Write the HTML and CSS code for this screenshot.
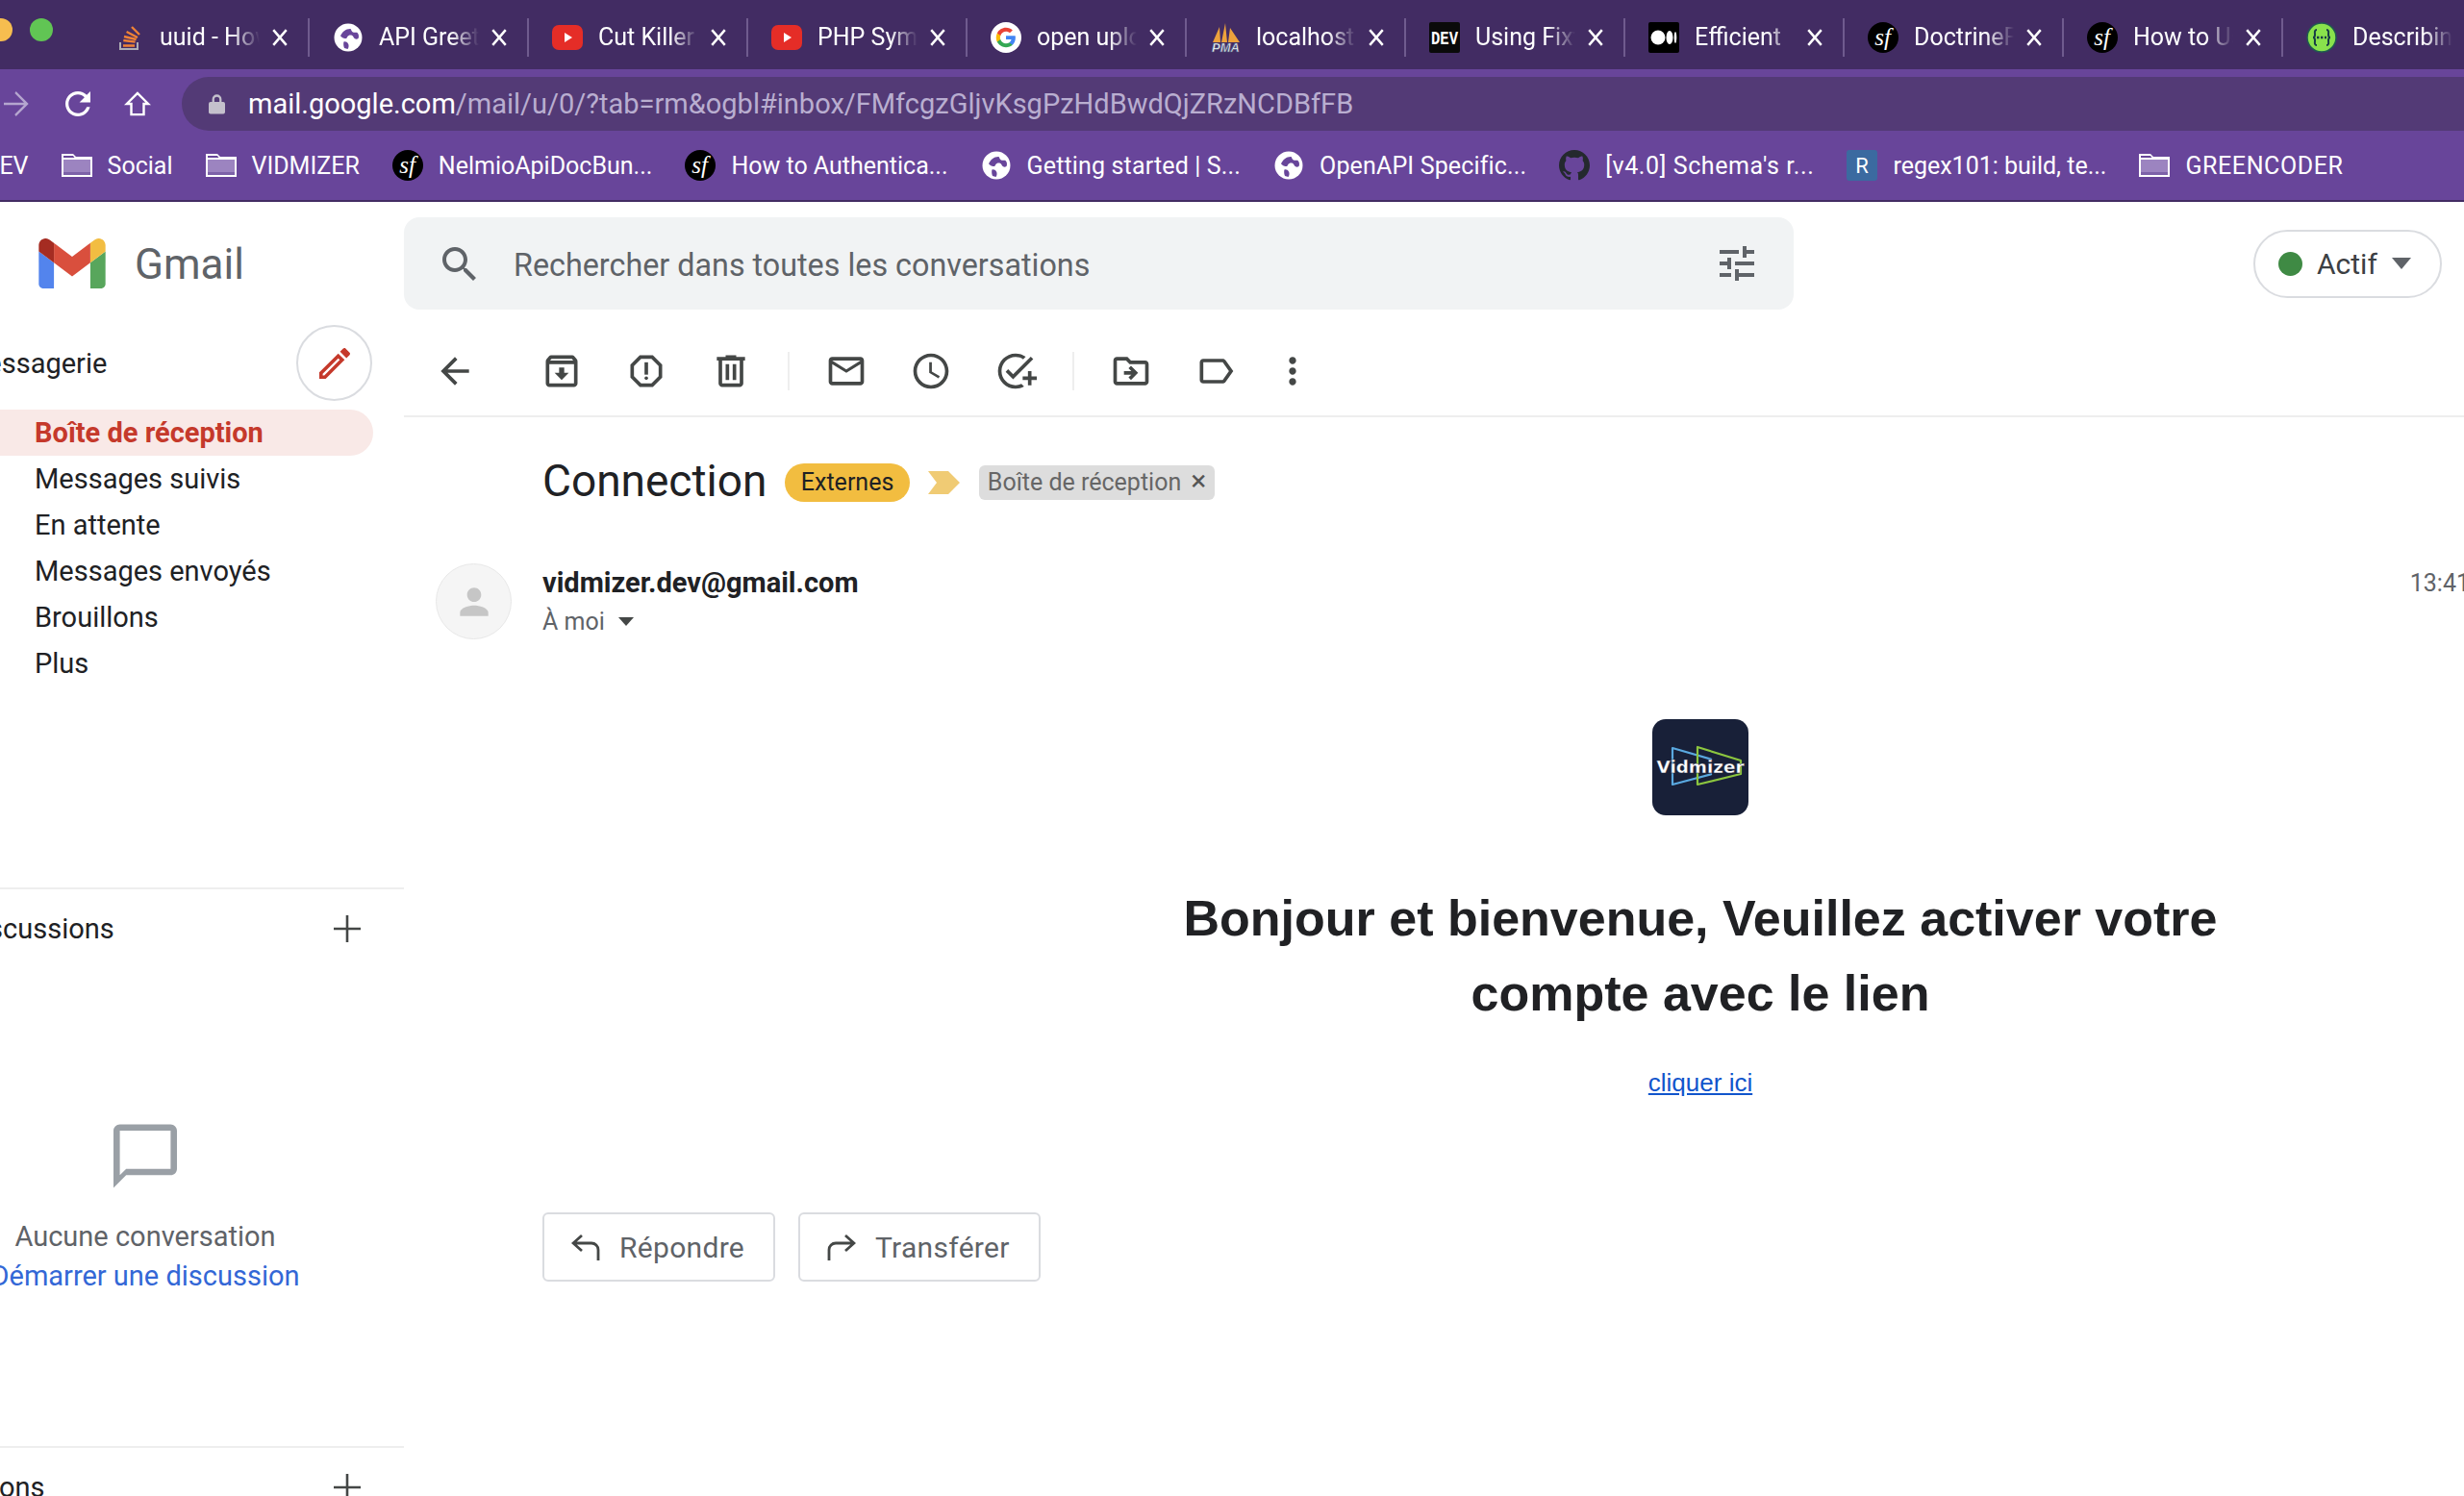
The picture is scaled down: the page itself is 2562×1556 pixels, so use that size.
FILE: index.html
```html
<!DOCTYPE html>
<html lang="fr">
<head>
    <meta charset="UTF-8">
    <meta name="viewport" content="width=device-width, initial-scale=1.0">
    <title>Connection - Gmail</title>
    <link rel="stylesheet" href="styles.css">
</head>
<body>
    <!-- icones reutilisees -->
    <svg class="sprite" aria-hidden="true">
        <symbol id="ic-globe" viewBox="0 0 32 32"><circle cx="16" cy="16" r="14.500" fill="#fff"/><path fill="#68459a" d="M8 14.500c1.500-4 5.500-7.500 10-7.500 1.500 0 1 2.500 3 3.500s3-.5 4.500.5c1.500 1.500 2 4 1 6-2 1.500-4 .5-5-1.500s-3-2.500-5-1.500-1 3.500-4 3-3.500-2-4.500-2.500z"/><path fill="#68459a" d="M11.500 20.500c2-.5 3.500.5 4.500 2s.5 4.500-.5 5.500l-3.500-1c-1-2.500-1-5-.5-6.500z"/></symbol>
        <symbol id="ic-yt" viewBox="0 0 32 32"><rect y="3" width="32" height="26" rx="7" fill="#e52d27"/><path fill="#fff" d="M13 11l8 5-8 5z"/></symbol>
        <symbol id="ic-sf" viewBox="0 0 32 32"><circle cx="16" cy="16" r="16" fill="#000"/><text x="15.500" y="24" text-anchor="middle" fill="#fff" font-family="Liberation Serif, serif" font-style="italic" font-size="25">sf</text></symbol>
        <symbol id="ic-folder" viewBox="0 0 32 32"><rect x="2" y="10" width="28" height="13" fill="#9c84c0"/><rect x="2" y="23" width="28" height="3" fill="#7d62a8"/><path fill="#fff" fill-rule="evenodd" d="M0 4h12l3 3h17v21H0zM2 6v2h11.500L12 6zM2 10v16h28V10z"/></symbol>
        <symbol id="ic-close" viewBox="0 0 16 16"><path stroke="#fff" stroke-width="2.200" d="M2 1l12 14M14 1L2 15"/></symbol>
        <symbol id="ic-plus" viewBox="0 0 28 28"><path stroke="#444746" stroke-width="2.600" d="M14 0v28M0 14h28"/></symbol>
    </svg>

    <header class="browser">
        <div class="tabs">
            <span class="light light-yellow"></span>
            <span class="light light-green"></span>
            <div class="tab">
                <svg class="favicon" viewBox="0 0 32 32"><path fill="#aeaeb4" d="M6 21h2v6h16v-6h2v8H6z"/><g stroke-width="2.400" stroke="#ef8236"><path d="M10 24.500h12M10.300 19l12.300 1.600M11 15l12.600 3M13.600 10L25 16M19 5l8 8"/></g></svg>
                <span class="tab-title">uuid - How to</span>
                <svg class="tab-close"><use href="#ic-close"/></svg>
            </div>
            <div class="tab">
                <svg class="favicon"><use href="#ic-globe"/></svg>
                <span class="tab-title">API Greetings</span>
                <svg class="tab-close"><use href="#ic-close"/></svg>
            </div>
            <div class="tab">
                <svg class="favicon"><use href="#ic-yt"/></svg>
                <span class="tab-title">Cut Killer Show</span>
                <svg class="tab-close"><use href="#ic-close"/></svg>
            </div>
            <div class="tab">
                <svg class="favicon"><use href="#ic-yt"/></svg>
                <span class="tab-title">PHP Symfony</span>
                <svg class="tab-close"><use href="#ic-close"/></svg>
            </div>
            <div class="tab">
                <svg class="favicon" viewBox="0 0 48 48"><circle cx="24" cy="24" r="24" fill="#fff"/><g transform="translate(7.200 7.200) scale(.7)"><path fill="#4285F4" d="M45.120 24.500c0-1.560-.14-3.060-.4-4.500H24v8.510h11.840c-.51 2.750-2.060 5.080-4.390 6.640v5.520h7.110c4.160-3.830 6.560-9.470 6.560-16.170z"/><path fill="#34A853" d="M24 46c5.940 0 10.920-1.970 14.560-5.330l-7.110-5.520c-1.970 1.320-4.490 2.100-7.450 2.100-5.730 0-10.580-3.870-12.310-9.070H4.340v5.700C7.960 41.070 15.400 46 24 46z"/><path fill="#FBBC05" d="M11.690 28.180C11.250 26.860 11 25.450 11 24s.25-2.860.69-4.180v-5.700H4.340C2.850 17.090 2 20.450 2 24c0 3.550.85 6.910 2.340 9.880l7.350-5.700z"/><path fill="#EA4335" d="M24 10.750c3.230 0 6.130 1.110 8.410 3.290l6.310-6.310C34.910 4.180 29.930 2 24 2 15.400 2 7.960 6.930 4.340 14.120l7.350 5.700c1.730-5.200 6.580-9.070 12.310-9.070z"/></g></svg>
                <span class="tab-title">open upload</span>
                <svg class="tab-close"><use href="#ic-close"/></svg>
            </div>
            <div class="tab">
                <svg class="favicon" viewBox="0 0 32 32"><path fill="#eda23c" d="M3 21L10 5l1 16zM12 21L16 1l2 20zM19 21l2-15 10 15z"/><text x="16.500" y="31" text-anchor="middle" fill="#fff" stroke="#4a5a80" stroke-width=".6" font-family="Liberation Sans, sans-serif" font-style="italic" font-weight="700" font-size="13">PMA</text></svg>
                <span class="tab-title">localhost / 127</span>
                <svg class="tab-close"><use href="#ic-close"/></svg>
            </div>
            <div class="tab">
                <svg class="favicon" viewBox="0 0 32 32"><rect width="32" height="32" rx="2" fill="#0a0a0a"/><text x="16" y="23" text-anchor="middle" fill="#fff" font-family="Liberation Mono, monospace" font-weight="700" font-size="20" textLength="28" lengthAdjust="spacingAndGlyphs">DEV</text></svg>
                <span class="tab-title">Using Fixtures</span>
                <svg class="tab-close"><use href="#ic-close"/></svg>
            </div>
            <div class="tab">
                <svg class="favicon" viewBox="0 0 32 32"><rect width="32" height="32" rx="2" fill="#000"/><circle cx="10" cy="16" r="7.500" fill="#fff"/><ellipse cx="22" cy="16" rx="3.500" ry="7" fill="#fff"/><ellipse cx="28" cy="16" rx="1.300" ry="6" fill="#fff"/></svg>
                <span class="tab-title">Efficient</span>
                <svg class="tab-close"><use href="#ic-close"/></svg>
            </div>
            <div class="tab">
                <svg class="favicon"><use href="#ic-sf"/></svg>
                <span class="tab-title">DoctrineFixtures</span>
                <svg class="tab-close"><use href="#ic-close"/></svg>
            </div>
            <div class="tab">
                <svg class="favicon"><use href="#ic-sf"/></svg>
                <span class="tab-title">How to Use</span>
                <svg class="tab-close"><use href="#ic-close"/></svg>
            </div>
            <div class="tab tab-last">
                <svg class="favicon" viewBox="0 0 32 32"><circle cx="16" cy="16" r="15" fill="#89e24c" stroke="#1f5a50" stroke-width="1.500"/><path fill="none" stroke="#173b46" stroke-width="2" d="M11 8c-3 0-2 3-2 5s-1 3-2 3c1 0 2 1 2 3s-1 5 2 5M21 8c3 0 2 3 2 5s1 3 2 3c-1 0-2 1-2 3s1 5-2 5"/><path stroke="#173b46" stroke-width="2.400" stroke-dasharray="2.400 1.600" d="M11 16h10"/></svg>
                <span class="tab-title">Describing API</span>
                <svg class="tab-close"><use href="#ic-close"/></svg>
            </div>
        </div>

        <div class="toolbar">
            <svg class="nav-icon nav-forward" viewBox="4 4 16 16"><path fill="#b5a6cf" d="M4 11.200h12.900l-5.900-5.900L11.800 4l8 8-8 8-.9-1.200 6-6H4z"/></svg>
            <svg class="nav-icon nav-reload" viewBox="4 4 16 16"><path fill="#fff" d="M17.650 6.350C16.200 4.900 14.210 4 12 4c-4.420 0-7.990 3.580-7.990 8s3.570 8 7.990 8c3.730 0 6.840-2.550 7.730-6h-2.080c-.82 2.330-3.040 4-5.650 4-3.310 0-6-2.690-6-6s2.690-6 6-6c1.660 0 3.140.69 4.220 1.780L13 11h7V4l-2.350 2.350z"/></svg>
            <svg class="nav-icon nav-home" viewBox="0 0 28 28"><path fill="none" stroke="#fff" stroke-width="2.600" d="M14 2L2 14h5v12h14V14h5z"/></svg>
            <div class="urlbar">
                <svg class="lock" viewBox="0 0 18 22"><path fill="none" stroke="#c4c0cc" stroke-width="2.400" d="M5 10V6a4 4 0 0 1 8 0v4"/><rect y="9" width="18" height="13" rx="2" fill="#c4c0cc"/></svg>
                <span class="url"><span class="url-host">mail.google.com</span>/mail/u/0/?tab=rm&amp;ogbl#inbox/FMfcgzGljvKsgPzHdBwdQjZRzNCDBfFB</span>
            </div>
        </div>

        <nav class="bookmarks">
            <span class="bookmark bookmark-cut">DEV</span>
            <a class="bookmark"><svg class="favicon"><use href="#ic-folder"/></svg>Social</a>
            <a class="bookmark"><svg class="favicon"><use href="#ic-folder"/></svg>VIDMIZER</a>
            <a class="bookmark"><svg class="favicon"><use href="#ic-sf"/></svg>NelmioApiDocBun...</a>
            <a class="bookmark"><svg class="favicon"><use href="#ic-sf"/></svg>How to Authentica...</a>
            <a class="bookmark spread-s"><svg class="favicon"><use href="#ic-globe"/></svg>Getting started | S...</a>
            <a class="bookmark spread-s"><svg class="favicon"><use href="#ic-globe"/></svg>OpenAPI Specific...</a>
            <a class="bookmark spread-m"><svg class="favicon" viewBox="0 0 24 24"><path fill="#24292e" d="M12 0C5.370 0 0 5.370 0 12c0 5.300 3.440 9.800 8.210 11.390.6.110.82-.26.82-.58v-2.030c-3.340.73-4.040-1.610-4.040-1.610-.55-1.390-1.340-1.760-1.340-1.760-1.090-.75.08-.73.08-.73 1.210.08 1.840 1.240 1.840 1.240 1.070 1.840 2.810 1.310 3.500 1 .11-.78.42-1.310.76-1.610-2.670-.3-5.470-1.330-5.470-5.930 0-1.310.47-2.380 1.240-3.220-.12-.3-.54-1.520.12-3.180 0 0 1.010-.32 3.300 1.230.96-.27 1.990-.4 3-.4s2.040.13 3 .4c2.290-1.550 3.300-1.230 3.300-1.230.66 1.660.24 2.880.12 3.180.77.84 1.240 1.910 1.240 3.220 0 4.610-2.810 5.620-5.480 5.920.43.370.82 1.100.82 2.220v3.290c0 .32.220.7.830.58C20.570 21.800 24 17.300 24 12c0-6.630-5.370-12-12-12z"/></svg>[v4.0] Schema's r...</a>
            <a class="bookmark"><svg class="favicon" viewBox="0 0 32 32"><rect width="32" height="32" rx="3" fill="#3b6aa0"/><text x="16" y="24" text-anchor="middle" fill="#fff" font-family="Roboto, sans-serif" font-size="22">R</text></svg>regex101: build, te...</a>
            <a class="bookmark spread-m"><svg class="favicon"><use href="#ic-folder"/></svg>GREENCODER</a>
        </nav>
    </header>

    <div class="gmail-head">
        <div class="brand">
            <svg class="gmail-logo" viewBox="52 42 88 66"><path fill="#5384ed" d="M58 108h14V74L52 59v43c0 3.320 2.690 6 6 6"/><path fill="#58a65c" d="M120 108h14c3.320 0 6-2.690 6-6V59l-20 15"/><path fill="#f2bd42" d="M120 48v26l20-15v-8c0-7.420-8.470-11.650-14.400-7.200"/><path fill="#d94f3d" d="M72 74V48l24 18 24-18v26L96 92"/><path fill="#a52c22" d="M52 51v8l20 15V48l-5.600-4.200c-5.940-4.450-14.400-.22-14.400 7.200"/></svg>
            <span class="brand-name">Gmail</span>
        </div>
        <div class="search">
            <svg class="search-icon" viewBox="3 3 17.500 17.500"><path d="M15.500 14h-.79l-.28-.27C15.410 12.590 16 11.110 16 9.500 16 5.910 13.090 3 9.500 3S3 5.910 3 9.500 5.910 16 9.500 16c1.610 0 3.090-.59 4.230-1.570l.27.28v.79l5 4.990L20.490 19l-4.990-5zm-6 0C7.010 14 5 11.990 5 9.500S7.010 5 9.500 5 14 7.010 14 9.500 11.990 14 9.500 14z"/></svg>
            <span class="search-text">Rechercher dans toutes les conversations</span>
            <svg class="tune-icon" viewBox="3 3 18 18"><path d="M3 17v2h6v-2H3zM3 5v2h10V5H3zm10 16v-2h8v-2h-8v-2h-2v6h2zM7 9v2H3v2h4v2h2V9H7zm14 4v-2H11v2h10zm-6-4h2V7h4V5h-4V3h-2v6z"/></svg>
        </div>
        <div class="status">
            <span class="status-dot"></span>
            <span>Actif</span>
            <span class="caret status-caret"></span>
        </div>
    </div>

    <div class="app">
        <aside class="sidebar">
            <div class="mail-title">
                <span class="section-label">Messagerie</span>
                <button class="compose"><svg viewBox="3 3 18 18"><path d="M14.060 9.020l.92.92L5.920 19H5v-.92l9.060-9.060M17.660 3c-.25 0-.51.1-.7.29l-1.830 1.830 3.750 3.750 1.830-1.830c.39-.39.39-1.020 0-1.410l-2.340-2.340c-.2-.2-.45-.29-.71-.29zm-3.600 3.190L3 17.250V21h3.750L17.810 9.940l-3.750-3.750z"/></svg></button>
            </div>
            <ul class="folders">
                <li class="folder folder-active">Boîte de réception</li>
                <li class="folder">Messages suivis</li>
                <li class="folder">En attente</li>
                <li class="folder">Messages envoyés</li>
                <li class="folder">Brouillons</li>
                <li class="folder">Plus</li>
            </ul>
            <div class="section section-chat">
                <span class="section-label">Discussions</span>
                <svg class="plus"><use href="#ic-plus"/></svg>
            </div>
            <div class="empty">
                <svg class="empty-icon" viewBox="2 2 20 20"><path d="M20 2H4c-1.100 0-2 .9-2 2v18l4-4h14c1.100 0 2-.9 2-2V4c0-1.100-.9-2-2-2zm0 14H6l-2 2V4h16v12z"/></svg>
                <span class="empty-text">Aucune conversation</span>
                <a class="empty-link">Démarrer une discussion</a>
            </div>
            <div class="section section-rooms">
                <span class="section-label">Salons</span>
                <svg class="plus"><use href="#ic-plus"/></svg>
            </div>
        </aside>

        <main class="main">
            <div class="actions">
                <svg class="act act-back" viewBox="0 0 24 24"><path d="M20 11H7.830l5.590-5.590L12 4l-8 8 8 8 1.410-1.410L7.830 13H20v-2z"/></svg>
                <svg class="act" viewBox="0 0 24 24"><path d="M20.540 5.230l-1.390-1.680C18.880 3.210 18.470 3 18 3H6c-.47 0-.88.21-1.160.55L3.460 5.230C3.170 5.570 3 6.020 3 6.500V19c0 1.100.9 2 2 2h14c1.100 0 2-.9 2-2V6.500c0-.48-.17-.93-.46-1.270zM6.240 5h11.520l.81.97H5.440l.8-.97zM5 19V8h14v11H5zm8.450-9h-2.900v3H8l4 4 4-4h-2.550z"/></svg>
                <svg class="act" viewBox="0 0 24 24"><path d="M15.730 3H8.270L3 8.270v7.460L8.270 21h7.460L21 15.730V8.270L15.730 3zM19 14.900L14.900 19H9.100L5 14.900V9.100L9.100 5h5.800L19 9.100v5.800z"/><circle cx="12" cy="16" r="1"/><path d="M11 7h2v7h-2z"/></svg>
                <svg class="act" viewBox="0 0 24 24"><path d="M15 4V3H9v1H4v2h1v13c0 1.100.9 2 2 2h10c1.100 0 2-.9 2-2V6h1V4h-5zm2 15H7V6h10v13zM9 8h2v9H9zm4 0h2v9h-2z"/></svg>
                <span class="act-sep"></span>
                <svg class="act" viewBox="0 0 24 24"><path d="M20 4H4c-1.100 0-2 .9-2 2v12c0 1.100.9 2 2 2h16c1.100 0 2-.9 2-2V6c0-1.100-.9-2-2-2zm0 14H4V8l8 5 8-5v10zm-8-7L4 6h16l-8 5z"/></svg>
                <svg class="act" viewBox="0 0 24 24"><path d="M11.990 2C6.470 2 2 6.480 2 12s4.470 10 9.990 10C17.520 22 22 17.520 22 12S17.520 2 11.990 2zM12 20c-4.420 0-8-3.580-8-8s3.580-8 8-8 8 3.580 8 8-3.580 8-8 8zm.5-13H11v6l5.250 3.150.75-1.230-4.500-2.670z"/></svg>
                <svg class="act" viewBox="0 0 24 24"><path d="M22 5.180L10.590 16.600l-4.240-4.240 1.410-1.410 2.830 2.830 10-10L22 5.180zM12 20c-4.410 0-8-3.590-8-8s3.590-8 8-8c1.570 0 3.040.46 4.280 1.250l1.450-1.450C16.100 2.670 14.130 2 12 2 6.480 2 2 6.480 2 12s4.480 10 10 10c1.730 0 3.360-.44 4.780-1.220l-1.500-1.500c-1 .46-2.110.72-3.280.72zm7-5h-3v2h3v3h2v-3h3v-2h-3v-3h-2v3z"/></svg>
                <span class="act-sep"></span>
                <svg class="act" viewBox="0 0 24 24"><path d="M20 6h-8l-2-2H4c-1.100 0-1.990.9-1.990 2L2 18c0 1.100.9 2 2 2h16c1.100 0 2-.9 2-2V8c0-1.100-.9-2-2-2zm0 12H4V6h5.170l2 2H20v10zm-8.010-9l-1.410 1.410L12.160 12H8v2h4.160l-1.590 1.590L11.990 17 16 13.010 11.990 9z"/></svg>
                <svg class="act" viewBox="0 0 24 24"><path d="M17.630 5.840C17.270 5.330 16.670 5 16 5L5 5.010C3.900 5.010 3 5.900 3 7v10c0 1.100.9 1.990 2 1.990L16 19c.67 0 1.270-.33 1.630-.84L22 12l-4.370-6.160zM16 17H5V7h11l3.550 5L16 17z"/></svg>
                <svg class="act act-more" viewBox="0 0 24 24"><path d="M12 8c1.100 0 2-.9 2-2s-.9-2-2-2-2 .9-2 2 .9 2 2 2zm0 2c-1.100 0-2 .9-2 2s.9 2 2 2 2-.9 2-2-.9-2-2-2zm0 6c-1.100 0-2 .9-2 2s.9 2 2 2 2-.9 2-2-.9-2-2-2z"/></svg>
            </div>

            <div class="subject">
                <h1 class="subject-text">Connection</h1>
                <span class="tag-external">Externes</span>
                <svg class="importance" viewBox="0 0 33 24"><path fill="#f0cb74" d="M0 0h21l12 12-12 12H0l9-12z"/></svg>
                <span class="tag-inbox">Boîte de réception<span class="tag-x">×</span></span>
            </div>

            <div class="sender">
                <div class="avatar"><svg viewBox="0 0 24 24"><path d="M12 12c2.210 0 4-1.790 4-4s-1.790-4-4-4-4 1.790-4 4 1.790 4 4 4zm0 2c-2.670 0-8 1.340-8 4v2h16v-2c0-2.660-5.330-4-8-4z"/></svg></div>
                <div class="sender-info">
                    <div class="sender-mail">vidmizer.dev@gmail.com</div>
                    <div class="sender-to">À moi <span class="caret to-caret"></span></div>
                </div>
                <span class="time">13:41</span>
            </div>

            <div class="message">
                <svg class="vid-logo" viewBox="0 0 100 100"><rect width="100" height="100" rx="14" fill="#182038"/><path fill="none" stroke="#5aa9e0" stroke-width="2.200" stroke-linejoin="round" d="M62 57L21 68V30l41 12"/><path fill="none" stroke="#8cc63f" stroke-width="2.200" stroke-linejoin="round" d="M47 29v39l45-11V43z"/><text x="50" y="56" text-anchor="middle" fill="#fff" font-family="DejaVu Sans, sans-serif" font-weight="700" font-size="18" textLength="91" lengthAdjust="spacingAndGlyphs" stroke="#182038" stroke-width=".3">Vidmizer</text></svg>
                <h2 class="welcome">Bonjour et bienvenue, Veuillez activer votre<br>compte avec le lien</h2>
                <a class="activate">cliquer ici</a>
            </div>

            <div class="replies">
                <button class="reply-btn"><svg viewBox="0 0 30 30"><path fill="none" stroke="#444746" stroke-width="2.800" d="M11 3L2 11l9 8M2 11h19a7 7 0 0 1 7 7v11"/></svg>Répondre</button>
                <button class="reply-btn reply-forward"><svg viewBox="0 0 30 30"><path fill="none" stroke="#444746" stroke-width="2.800" d="M19 3l9 8-9 8M28 11H9a7 7 0 0 0-7 7v11"/></svg>Transférer</button>
            </div>
        </main>
    </div>
</body>
</html>
```

FILE: styles.css
```css
html, body {
    margin: 0;
    width: 2562px;
    height: 1556px;
    overflow: hidden;
    background-color: #fff;
    font-family: Roboto, "Liberation Sans", sans-serif;
    color: #202124;
}
.sprite {
    display: none;
}

/* barre du navigateur */
.browser {
    background-color: #68459a;
    border-bottom: 2px solid #422c63;
    color: #fff;
}
.tabs {
    display: flex;
    align-items: center;
    height: 72px;
    background-color: #422c63;
    overflow: hidden;
}
.light {
    flex: none;
    width: 24px;
    height: 24px;
    border-radius: 50%;
    margin-top: -10px;
}
.light-yellow {
    background-color: #f6bd4f;
    margin-left: -11px;
}
.light-green {
    background-color: #61c554;
    margin-left: 18px;
    margin-right: 39px;
}
.tab {
    flex: none;
    display: flex;
    align-items: center;
    box-sizing: border-box;
    width: 228px;
    height: 40px;
    margin-top: 5px;
    padding-left: 24px;
    border-right: 2px solid #6f5b8e;
}
.tab-last {
    border-right: none;
}
.favicon {
    flex: none;
    width: 32px;
    height: 32px;
}
.tab-title {
    flex: none;
    width: 104px;
    margin-left: 16px;
    font-size: 25px;
    white-space: nowrap;
    overflow: hidden;
    -webkit-mask-image: linear-gradient(to right, #000 72%, transparent);
    mask-image: linear-gradient(to right, #000 72%, transparent);
}
.tab-close {
    flex: none;
    width: 18px;
    height: 18px;
    margin-left: 12px;
}

.toolbar {
    display: flex;
    align-items: center;
    height: 56px;
    padding: 8px 0 4px;
}
.nav-icon {
    flex: none;
    width: 28px;
    height: 26px;
}
.nav-forward {
    margin-left: 3px;
}
.nav-reload {
    margin-left: 36px;
}
.nav-home {
    margin-left: 34px;
}
.urlbar {
    flex: 1;
    display: flex;
    align-items: center;
    height: 56px;
    margin-left: 32px;
    padding-left: 28px;
    background-color: #533a76;
    border-radius: 28px 0 0 28px;
}
.lock {
    width: 17px;
    height: 22px;
}
.url {
    margin-left: 24px;
    font-size: 29px;
    color: #b9aed0;
    white-space: nowrap;
}
.url-host {
    color: #fff;
}

.bookmarks {
    display: flex;
    align-items: center;
    gap: 34px;
    height: 64px;
    padding-bottom: 4px;
    font-size: 25px;
    white-space: nowrap;
    overflow: hidden;
}
.bookmark {
    flex: none;
    display: flex;
    align-items: center;
    gap: 16px;
}
.bookmark-cut {
    margin-left: -17px;
}
.spread-s {
    letter-spacing: .15px;
}
.spread-m {
    letter-spacing: .6px;
}

/* entete gmail */
.gmail-head {
    display: flex;
    align-items: center;
    height: 116px;
    box-sizing: border-box;
    padding-top: 12px;
}
.brand {
    flex: none;
    display: flex;
    align-items: center;
    width: 420px;
    box-sizing: border-box;
    padding-left: 40px;
}
.gmail-logo {
    width: 70px;
    height: 52px;
}
.brand-name {
    margin: 2px 0 0 30px;
    font-size: 44px;
    color: #5f6368;
}
.search {
    flex: none;
    display: flex;
    align-items: center;
    box-sizing: border-box;
    width: 1445px;
    height: 96px;
    padding: 0 40px;
    background-color: #f1f3f4;
    border-radius: 16px;
}
.search-icon {
    width: 35px;
    height: 35px;
    fill: #5f6368;
}
.search-text {
    flex: 1;
    margin: 3px 0 0 39px;
    font-size: 32.300px;
    color: #5f6368;
}
.tune-icon {
    width: 38px;
    height: 36px;
    fill: #5f6368;
}
.status {
    display: flex;
    align-items: center;
    box-sizing: border-box;
    width: 196px;
    height: 71px;
    margin-left: 478px;
    padding-left: 24px;
    border: 2px solid #dadce0;
    border-radius: 36px;
    font-size: 30px;
    color: #3c4043;
}
.status-dot {
    width: 25px;
    height: 25px;
    margin-right: 15px;
    background-color: #3f8a44;
    border-radius: 50%;
}
.caret {
    width: 0;
    height: 0;
    border-style: solid;
    border-color: #5f6368 transparent transparent;
}
.status-caret {
    border-width: 12px 10px 0;
    margin-left: 15px;
}

.app {
    display: flex;
    height: 1230px;
}

/* colonne de gauche */
.sidebar {
    flex: none;
    width: 420px;
    overflow: hidden;
    font-size: 29px;
}
.mail-title {
    display: flex;
    align-items: center;
    justify-content: space-between;
    height: 79px;
    margin-top: 12px;
    padding-right: 33px;
}
.section-label {
    margin-left: -39px;
    white-space: nowrap;
}
.section-chat .section-label {
    margin-left: -38px;
}
.section-rooms .section-label {
    margin-left: -41px;
}
.compose {
    width: 79px;
    height: 79px;
    padding: 0;
    background: #fff;
    border: 2px solid #dadce0;
    border-radius: 50%;
}
.compose svg {
    display: block;
    width: 32px;
    height: 32px;
    margin: auto;
    fill: #c5392b;
}
.folders {
    list-style: none;
    margin: 9px 0 0;
    padding: 0;
}
.folder {
    width: 388px;
    box-sizing: border-box;
    height: 48px;
    line-height: 48px;
    padding-left: 36px;
}
.folder-active {
    background-color: #f9e9e7;
    border-radius: 0 24px 24px 0;
    color: #c5392b;
    font-weight: 700;
}
.section {
    display: flex;
    align-items: center;
    justify-content: space-between;
    height: 82px;
    padding-right: 45px;
    border-top: 2px solid #eeeeee;
}
.section-chat {
    margin-top: 209px;
}
.section-rooms {
    margin-top: 160px;
}
.plus {
    width: 28px;
    height: 28px;
}
.empty {
    display: flex;
    flex-direction: column;
    align-items: center;
    width: 302px;
    margin-top: 162px;
    white-space: nowrap;
}
.empty-icon {
    width: 66px;
    height: 67px;
    fill: #9aa0a6;
}
.empty-text {
    margin-top: 33px;
    font-size: 29px;
    color: #5f6368;
}
.empty-link {
    margin-top: 7px;
    font-size: 29px;
    color: #3367d6;
}

/* contenu du message */
.main {
    flex: none;
    width: 2142px;
    overflow: hidden;
}
.actions {
    display: flex;
    align-items: center;
    height: 93px;
    padding: 13px 0 0 31px;
    border-bottom: 2px solid #eeeeee;
}
.act {
    flex: none;
    width: 44px;
    height: 44px;
    margin: 0 22px;
    fill: #444746;
}
.act-back {
    margin: 0 45px 0 0;
}
.act-sep {
    flex: none;
    width: 2px;
    height: 40px;
    margin: 0 15px;
    background-color: #eeeeee;
}
.act-more {
    margin-left: 14px;
}
.subject {
    display: flex;
    align-items: center;
    height: 98px;
    padding-left: 144px;
    margin-top: 17px;
}
.subject-text {
    margin: 0 19px 0 0;
    font-size: 46px;
    font-weight: 400;
}
.tag-external {
    height: 40px;
    line-height: 40px;
    margin-top: 3px;
    padding: 0 16.500px;
    background-color: #f2bd40;
    border-radius: 20px;
    font-size: 25px;
}
.importance {
    width: 33px;
    height: 24px;
    margin: 3px 20px 0 19px;
}
.tag-inbox {
    height: 36px;
    line-height: 36px;
    margin-top: 3px;
    padding: 0 9px;
    background-color: #dddddd;
    border-radius: 6px;
    font-size: 25px;
    color: #666666;
}
.tag-x {
    margin-left: 10px;
    font-size: 30px;
    line-height: 30px;
    color: #555;
}
.sender {
    display: flex;
    align-items: flex-start;
    margin-top: 37px;
    padding-left: 33px;
    margin-right: -6px;
}
.avatar {
    flex: none;
    display: flex;
    align-items: center;
    justify-content: center;
    box-sizing: border-box;
    width: 79px;
    height: 79px;
    background-color: #f5f5f5;
    border: 1px solid #e8e8e8;
    border-radius: 50%;
}
.avatar svg {
    width: 44px;
    height: 44px;
    fill: #c6c6c6;
}
.sender-info {
    flex: 1;
    margin-left: 32px;
}
.sender-mail {
    margin-top: 3px;
    font-size: 29px;
    font-weight: 700;
}
.sender-to {
    display: flex;
    align-items: center;
    margin-top: 9px;
    font-size: 25px;
    color: #5f6368;
}
.to-caret {
    border-width: 9px 8px 0;
    border-top-color: #444746;
    margin-left: 14px;
}
.time {
    font-size: 25px;
    color: #5f6368;
    margin-top: 6px;
}
.message {
    display: flex;
    flex-direction: column;
    align-items: center;
    width: 2408px;
    margin: 83px 0 0 144px;
    font-family: "Liberation Sans", Arial, sans-serif;
}
.vid-logo {
    width: 100px;
    height: 100px;
}
.welcome {
    margin: 68px 0 0;
    font-size: 52px;
    line-height: 78px;
    font-weight: 700;
    text-align: center;
}
.activate {
    margin-top: 39px;
    font-size: 26px;
    color: #1155cc;
    text-decoration: underline;
}
.replies {
    display: flex;
    gap: 24px;
    margin: 119px 0 0 144px;
}
.reply-btn {
    display: flex;
    align-items: center;
    gap: 20px;
    box-sizing: border-box;
    width: 242px;
    height: 72px;
    padding: 0 28px;
    background: #fff;
    border: 2px solid #dadce0;
    border-radius: 6px;
    font-family: Roboto, sans-serif;
    font-size: 30px;
    letter-spacing: .3px;
    color: #5f6368;
}
.reply-forward {
    width: 252px;
}
.reply-btn svg {
    flex: none;
    width: 30px;
    height: 30px;
}
```
